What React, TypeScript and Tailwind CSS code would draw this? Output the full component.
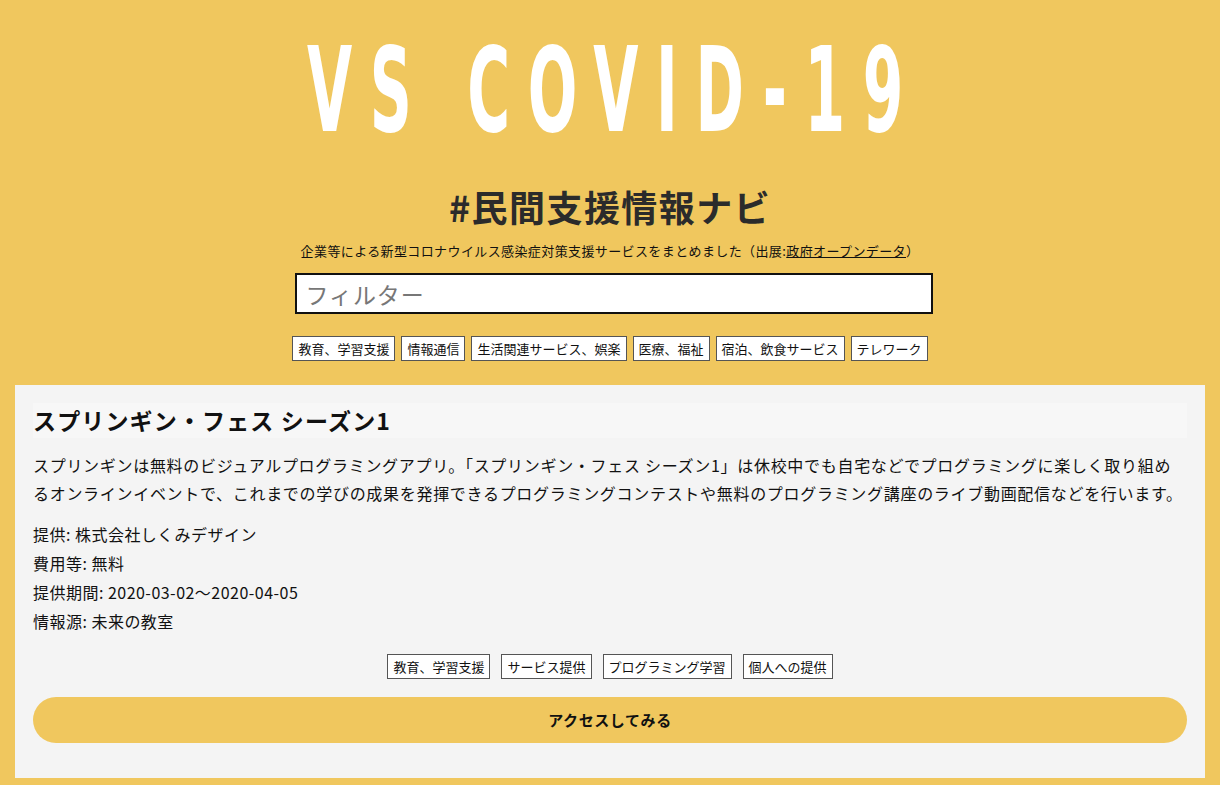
import React from 'react'

const categories = ['教育、学習支援', '情報通信', '生活関連サービス、娯楽', '医療、福祉', '宿泊、飲食サービス', 'テレワーク']
const cardTags = ['教育、学習支援', 'サービス提供', 'プログラミング学習', '個人への提供']

const jp = "font-['Hiragino_Sans','Noto_Sans_CJK_JP',sans-serif]"

function Tag({ label }: { label: string }) {
  return (
    <span className="inline-block bg-white border border-[#555] px-[5px] text-[13px] leading-[23px] text-[#111]">
      {label}
    </span>
  )
}

export default function App() {
  return (
    <div className={`min-h-[785px] bg-[#f0c75e] ${jp} text-[#111] pb-2`}>
      {/* Header */}
      <header className="flex flex-col items-center">
        <h1 className="mt-[30px] h-[120px] flex items-center justify-center whitespace-nowrap text-white font-['DejaVu_Sans_Condensed',sans-serif] font-bold text-[118px] leading-none tracking-[32px] pl-[14px] scale-x-[0.55]">
          VS COVID-19
        </h1>
        <h2 className="mt-[34px] text-[36px] leading-[44px] font-bold tracking-[0.04em] text-[#2b2b2b]">#民間支援情報ナビ</h2>
        <p className="mt-[14px] text-[13px] leading-[18px] tracking-[0.03em]">
          企業等による新型コロナウイルス感染症対策支援サービスをまとめました（出展:<span className="underline">政府オープンデータ</span>）
        </p>
        <input
          placeholder="フィルター"
          className="mt-[13px] ml-[7px] w-[638px] h-[41px] bg-white border-2 border-[#111] px-[9px] text-[23px] tracking-[0.04em] placeholder:text-[#777] outline-none"
        />
        <div className="mt-[22px] flex gap-[6px]">
          {categories.map(c => <Tag key={c} label={c} />)}
        </div>
      </header>

      {/* Card */}
      <section className="mx-[15px] mt-[24px] bg-[#f4f4f4] px-[18px] pt-[18px] pb-[35px]">
        <h3 className="bg-[#f7f7f7] text-[23px] leading-[35px] font-bold tracking-[0.05em]">スプリンギン・フェス シーズン1</h3>
        <p className="mt-[13px] text-[16px] leading-[28px] tracking-[0.7px]">
          スプリンギンは無料のビジュアルプログラミングアプリ。「スプリンギン・フェス シーズン1」は休校中でも自宅などでプログラミングに楽しく取り組めるオンラインイベントで、これまでの学びの成果を発揮できるプログラミングコンテストや無料のプログラミング講座のライブ動画配信などを行います。
        </p>
        <div className="mt-[13px] text-[16px] leading-[29px] tracking-[0.03em]">
          <div>提供: 株式会社しくみデザイン</div>
          <div>費用等: 無料</div>
          <div>提供期間: 2020-03-02〜2020-04-05</div>
          <div>情報源: 未来の教室</div>
        </div>
        <div className="mt-[18px] flex justify-center gap-[11px]">
          {cardTags.map(t => <Tag key={t} label={t} />)}
        </div>
        <button className="mt-[18px] w-full h-[46px] rounded-full bg-[#f0c75e] text-[15px] font-bold tracking-[0.04em] text-[#111]">
          アクセスしてみる
        </button>
      </section>
    </div>
  )
}
